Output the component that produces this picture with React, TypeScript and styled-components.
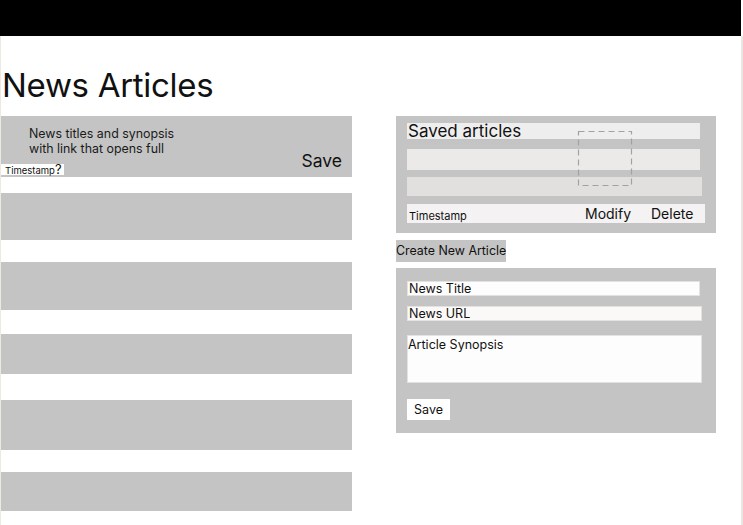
import React from "react";
import styled, { createGlobalStyle } from "styled-components";

const GlobalStyle = createGlobalStyle`
  html, body {
    margin: 0;
    padding: 0;
    background: #ffffff;
  }
  body {
    font-family: Inter, "Noto Sans", sans-serif;
    color: #111111;
  }
`;

const Page = styled.div`
  width: 743px;
  height: 525px;
  overflow: hidden;
  display: flex;
  flex-direction: column;
`;

const TopBar = styled.div`
  height: 36px;
  width: 741px;
  background: #000000;
  flex-shrink: 0;
`;

const Frame = styled.div`
  flex: 1;
  width: 740px;
  border-left: 1px solid #ece8e3;
  border-right: 2px solid #ebe6e1;
`;

const PageTitle = styled.h1`
  margin: 32px 0 14px 1px;
  font-size: 33px;
  line-height: 34px;
  font-weight: 400;
  letter-spacing: -0.3px;
`;

const Columns = styled.div`
  display: flex;
  align-items: flex-start;
  gap: 44px;
`;

const FeedColumn = styled.div`
  width: 351px;
  display: flex;
  flex-direction: column;
`;

const FeedCard = styled.div<{ $height: number; $gap: number }>`
  height: ${({ $height }) => $height}px;
  margin-top: ${({ $gap }) => $gap}px;
  background: #c4c4c4;
  box-sizing: border-box;
`;

const FirstCard = styled(FeedCard)`
  display: flex;
  align-items: flex-end;
  justify-content: space-between;
  padding: 10px 10px 2px 0;
`;

const CardBody = styled.div`
  display: flex;
  flex-direction: column;
  align-self: stretch;
`;

const Synopsis = styled.p`
  margin: 0 0 8px 28px;
  font-size: 12.4px;
  line-height: 15px;
  color: #1a1a1a;
`;

const TimestampTag = styled.div`
  width: 63px;
  height: 11px;
  background: #ffffff;
  display: flex;
  align-items: baseline;
  padding-left: 4px;
  box-sizing: border-box;
  font-size: 9.5px;
  line-height: 11px;
  white-space: nowrap;

  span {
    font-size: 13px;
    line-height: 11px;
  }
`;

const CardSave = styled.span`
  font-size: 17.5px;
  line-height: 22px;
  margin-bottom: 3px;
`;

const SideColumn = styled.div`
  width: 320px;
  display: flex;
  flex-direction: column;
  align-items: flex-start;
`;

const GrayPanel = styled.div<{ $pt: number; $pb: number }>`
  position: relative;
  width: 320px;
  box-sizing: border-box;
  background: #c4c4c4;
  padding: ${({ $pt, $pb }) => `${$pt}px 0 ${$pb}px 11px`};
  display: flex;
  flex-direction: column;
  align-items: flex-start;
`;

const SavedRow = styled.div<{ $w: number; $h: number; $mt: number; $bg: string }>`
  width: ${({ $w }) => $w}px;
  height: ${({ $h }) => $h}px;
  margin-top: ${({ $mt }) => $mt}px;
  background: ${({ $bg }) => $bg};
  box-sizing: border-box;
`;

const SavedTitle = styled(SavedRow)`
  padding-left: 1px;
  font-size: 17px;
  line-height: 17px;
  white-space: nowrap;
`;

const ActionRow = styled(SavedRow)`
  display: flex;
  align-items: flex-end;
  padding: 0 0 0 2px;
`;

const RowStamp = styled.span`
  font-size: 11px;
  line-height: 13px;
  flex: 1;
`;

const RowAction = styled.span<{ $w: number }>`
  width: ${({ $w }) => $w}px;
  font-size: 14px;
  line-height: 19px;
  height: 19px;
  margin-top: -2px;
`;

const DashedMarker = styled.svg`
  position: absolute;
  left: 182px;
  top: 15px;
  width: 55px;
  height: 56px;
  overflow: visible;
`;

const CreateButton = styled.div`
  margin: 7px 0 6px;
  width: 110px;
  height: 22px;
  background: #c4c4c4;
  font-size: 12.4px;
  line-height: 22px;
  white-space: nowrap;
`;

const FormField = styled.div<{ $w: number; $h: number; $mt: number; $bg: string }>`
  width: ${({ $w }) => $w}px;
  height: ${({ $h }) => $h}px;
  margin-top: ${({ $mt }) => $mt}px;
  background: ${({ $bg }) => $bg};
  box-sizing: border-box;
  border: 1px solid #e4e2e0;
  padding-left: 1px;
  font-size: 12.5px;
  line-height: 14px;
`;

const SynopsisField = styled(FormField)`
  line-height: 18px;
  padding-left: 0;
`;

const FormSave = styled.div`
  margin-top: 16px;
  width: 43px;
  height: 21px;
  background: #ffffff;
  font-size: 12.5px;
  line-height: 21px;
  text-align: center;
`;

const feedCards = [
  { height: 47, gap: 16 },
  { height: 48, gap: 22 },
  { height: 40, gap: 24 },
  { height: 50, gap: 26 },
  { height: 39, gap: 22 },
];

export default function App() {
  return (
    <>
      <GlobalStyle />
      <Page>
        <TopBar />
        <Frame>
          <PageTitle>News Articles</PageTitle>
          <Columns>
            <FeedColumn>
              <FirstCard $height={61} $gap={0}>
                <CardBody>
                  <Synopsis>
                    News titles and synopsis
                    <br />
                    with link that opens full
                  </Synopsis>
                  <TimestampTag>
                    Timestamp<span>?</span>
                  </TimestampTag>
                </CardBody>
                <CardSave>Save</CardSave>
              </FirstCard>
              {feedCards.map((card, i) => (
                <FeedCard key={i} $height={card.height} $gap={card.gap} />
              ))}
            </FeedColumn>

            <SideColumn>
              <GrayPanel $pt={7} $pb={10}>
                <SavedTitle $w={293} $h={16} $mt={0} $bg="#efeeee">
                  Saved articles
                </SavedTitle>
                <SavedRow $w={293} $h={21} $mt={10} $bg="#ece9e9" />
                <SavedRow $w={295} $h={19} $mt={7} $bg="#e2dfdf" />
                <ActionRow $w={298} $h={19} $mt={8} $bg="#f4f2f2">
                  <RowStamp>Timestamp</RowStamp>
                  <RowAction $w={66}>Modify</RowAction>
                  <RowAction $w={54}>Delete</RowAction>
                </ActionRow>
                <DashedMarker viewBox="0 0 55 56">
                  <rect
                    x="0.5"
                    y="0.5"
                    width="53"
                    height="54"
                    fill="none"
                    stroke="#a2a2a2"
                    strokeWidth="1.2"
                    strokeDasharray="6 4"
                  />
                </DashedMarker>
              </GrayPanel>

              <CreateButton>Create New Article</CreateButton>

              <GrayPanel $pt={13} $pb={13}>
                <FormField $w={293} $h={15} $mt={0} $bg="#fefdfd">
                  News Title
                </FormField>
                <FormField $w={295} $h={15} $mt={10} $bg="#fbf9f8">
                  News URL
                </FormField>
                <SynopsisField $w={295} $h={48} $mt={14} $bg="#fefdfd">
                  Article Synopsis
                </SynopsisField>
                <FormSave>Save</FormSave>
              </GrayPanel>
            </SideColumn>
          </Columns>
        </Frame>
      </Page>
    </>
  );
}
